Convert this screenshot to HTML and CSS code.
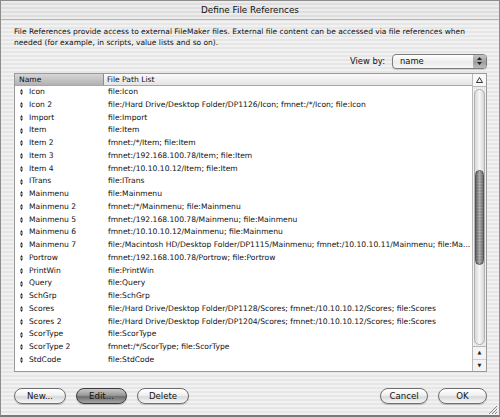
FILE: index.html
```html
<!DOCTYPE html>
<html lang="en">
<head>
  <meta charset="UTF-8">
  <title>Define File References</title>
  <link rel="stylesheet" href="styles.css">
</head>
<body>
  <div class="window">
    <!-- Title bar -->
    <div class="titlebar">Define File References</div>

    <div class="content">
      <p class="desc">File References provide access to external FileMaker files. External file content can be accessed via file references when needed (for example, in scripts, value lists and so on).</p>

      <div class="view-row">
        <span class="view-label">View by:</span>
        <div class="popup">
          <span class="popup-value">name</span>
          <span class="popup-arrows">
            <svg width="5" height="8" viewBox="0 0 5 8"><path d="M2.5 0 L5 3 L0 3 Z M2.5 8 L5 5 L0 5 Z" fill="#222"/></svg>
          </span>
        </div>
      </div>

      <!-- List -->
      <div class="list">
        <div class="list-main">
          <div class="list-header">
            <div class="hcell name-col sorted">Name</div>
            <div class="hcell path-col">File Path List</div>
          </div>
          <div class="rows" id="rows"></div>
        </div>
        <div class="scrollbar">
          <div class="sb-cap">
            <svg width="7" height="6" viewBox="0 0 7 6"><path d="M3.5 0.5 L6.5 5.5 L0.5 5.5 Z" fill="none" stroke="#333" stroke-width="1"/></svg>
          </div>
          <div class="sb-track">
            <div class="sb-thumb"></div>
          </div>
          <div class="sb-arrows">
            <span class="sb-arrow">&#9650;</span>
            <span class="sb-arrow">&#9660;</span>
          </div>
        </div>
      </div>

      <!-- Buttons -->
      <div class="button-row">
        <div class="button-group">
          <button class="btn">New...</button>
          <button class="btn btn-default">Edit...</button>
          <button class="btn">Delete</button>
        </div>
        <div class="button-group">
          <button class="btn btn-cancel">Cancel</button>
          <button class="btn btn-ok">OK</button>
        </div>
      </div>
    </div>

    <div class="grip">
      <svg width="9" height="9" viewBox="0 0 9 9">
        <path d="M9 1 L1 9 M9 4 L4 9 M9 7 L7 9" stroke="#888" stroke-width="1"/>
      </svg>
    </div>
  </div>

  <script>
    var refs = [
      ['Icon', 'file:Icon'],
      ['Icon 2', 'file:/Hard Drive/Desktop Folder/DP1126/Icon; fmnet:/*/Icon; file:Icon'],
      ['Import', 'file:Import'],
      ['Item', 'file:Item'],
      ['Item 2', 'fmnet:/*/Item; file:Item'],
      ['Item 3', 'fmnet:/192.168.100.78/Item; file:Item'],
      ['Item 4', 'fmnet:/10.10.10.12/Item; file:Item'],
      ['ITrans', 'file:ITrans'],
      ['Mainmenu', 'file:Mainmenu'],
      ['Mainmenu 2', 'fmnet:/*/Mainmenu; file:Mainmenu'],
      ['Mainmenu 5', 'fmnet:/192.168.100.78/Mainmenu; file:Mainmenu'],
      ['Mainmenu 6', 'fmnet:/10.10.10.12/Mainmenu; file:Mainmenu'],
      ['Mainmenu 7', 'file:/Macintosh HD/Desktop Folder/DP1115/Mainmenu; fmnet:/10.10.10.11/Mainmenu; file:Ma...'],
      ['Portrow', 'fmnet:/192.168.100.78/Portrow; file:Portrow'],
      ['PrintWin', 'file:PrintWin'],
      ['Query', 'file:Query'],
      ['SchGrp', 'file:SchGrp'],
      ['Scores', 'file:/Hard Drive/Desktop Folder/DP1128/Scores; fmnet:/10.10.10.12/Scores; file:Scores'],
      ['Scores 2', 'file:/Hard Drive/Desktop Folder/DP1204/Scores; fmnet:/10.10.10.12/Scores; file:Scores'],
      ['ScorType', 'file:ScorType'],
      ['ScorType 2', 'fmnet:/*/ScorType; file:ScorType'],
      ['StdCode', 'file:StdCode']
    ];

    var handle = '<svg class="handle" width="3" height="6" viewBox="0 0 3 6"><path d="M1.5 0 L3 2.5 L0 2.5 Z M1.5 6 L3 3.5 L0 3.5 Z" fill="#222"/></svg>';
    var rows = document.getElementById('rows');
    refs.forEach(function (r) {
      var row = document.createElement('div');
      row.className = 'row';
      row.innerHTML = '<div class="cell name-col">' + handle + '<span>' + r[0] + '</span></div>' +
                      '<div class="cell path-col">' + r[1] + '</div>';
      rows.appendChild(row);
    });
  </script>
</body>
</html>
```

FILE: styles.css
```css
body {
  margin: 0;
  font-family: "DejaVu Sans", Verdana, sans-serif;
  background: #6e6e6e;
}

.window {
  position: relative;
  width: 500px;
  height: 417px;
  box-sizing: border-box;
  border: 1px solid #8c8c8c;
  border-bottom: 2px solid #7a7a7a;
  background: repeating-linear-gradient(to bottom, #f1f1f1 0, #f1f1f1 2px, #e6e6e6 2px, #e6e6e6 4px);
  display: flex;
  flex-direction: column;
  color: #111;
  overflow: hidden;
}

.titlebar {
  height: 18px;
  line-height: 18px;
  text-align: center;
  font-size: 8.8px;
  border-bottom: 1px solid #b4b4b4;
  background: repeating-linear-gradient(to bottom, #ececec 0, #ececec 2px, #dedede 2px, #dedede 4px);
}

.content {
  padding: 0 12px 0 13px;
  display: flex;
  flex-direction: column;
  min-width: 0;
}

.desc {
  margin: 7px 0 0 0;
  font-size: 7.5px;
  line-height: 10.5px;
}

/* View by popup */
.view-row {
  display: flex;
  justify-content: flex-end;
  align-items: center;
  margin-top: 5px;
  height: 16px;
}

.view-label {
  font-size: 8.4px;
  margin-right: 7px;
}

.popup {
  width: 95px;
  height: 15px;
  box-sizing: border-box;
  border: 1px solid #7c7c7c;
  border-radius: 4px;
  background: linear-gradient(to bottom, #ffffff, #ececec 55%, #f7f7f7);
  display: flex;
  align-items: center;
  box-shadow: 0 1px 1px rgba(0, 0, 0, 0.15);
}

.popup-value {
  flex: 1;
  padding-left: 7px;
  font-size: 8.4px;
}

.popup-arrows {
  width: 13px;
  height: 13px;
  border-radius: 0 3px 3px 0;
  background: linear-gradient(to bottom, #c4c4c4, #9e9e9e 55%, #bcbcbc);
  display: flex;
  align-items: center;
  justify-content: center;
}

/* List */
.list {
  margin-top: 4px;
  height: 299px;
  box-sizing: border-box;
  border: 1px solid #9a9a9a;
  background: #fff;
  display: flex;
  min-width: 0;
}

.list-main {
  flex: 1;
  min-width: 0;
  display: flex;
  flex-direction: column;
}

.list-header {
  display: flex;
  height: 11px;
  border-bottom: 1px solid #a8a8a8;
  font-size: 7.6px;
}

.hcell {
  line-height: 11px;
  padding-left: 4px;
  background: linear-gradient(to bottom, #fafafa, #e4e4e4);
}

.hcell.sorted {
  background: linear-gradient(to bottom, #d6d6d6, #b2b2b2);
  border-right: 1px solid #8c8c8c;
}

.name-col {
  width: 84px;
  flex: none;
}

.path-col {
  flex: 1;
  min-width: 0;
  white-space: nowrap;
  overflow: hidden;
}

.list-header .path-col {
  padding-left: 3px;
}

.rows {
  font-size: 7.6px;
}

.row {
  display: flex;
  height: 12.76px;
  line-height: 12.76px;
}

.row .name-col {
  display: flex;
  align-items: center;
  padding-left: 5px;
  width: 84px;
}

.handle {
  margin-right: 6px;
}

.row .path-col {
  padding-left: 4px;
}

/* Scrollbar */
.scrollbar {
  width: 13px;
  flex: none;
  border-left: 1px solid #b8b8b8;
  display: flex;
  flex-direction: column;
  background: repeating-linear-gradient(to right, #f2f2f2 0, #f2f2f2 1px, #e2e2e2 1px, #e2e2e2 2px);
}

.sb-cap {
  height: 12px;
  border-bottom: 1px solid #b8b8b8;
  background: #f8f8f8;
  display: flex;
  align-items: center;
  justify-content: center;
}

.sb-track {
  flex: 1;
  margin: 2px 1px 1px 1px;
  border-radius: 6px;
  border: 1px solid #b0b0b0;
  background: linear-gradient(to right, #d8d8d8, #f6f6f6 50%, #d8d8d8);
  padding-top: 80px;
}

.sb-thumb {
  height: 95px;
  border-radius: 6px;
  border: 1px solid #555;
  box-sizing: border-box;
  background:
    repeating-linear-gradient(to bottom, rgba(255, 255, 255, 0.12) 0, rgba(255, 255, 255, 0.12) 1px, transparent 1px, transparent 3px),
    linear-gradient(to right, #5e5e5e, #a8a8a8 50%, #6a6a6a);
}

.sb-arrows {
  height: 24px;
  display: flex;
  flex-direction: column;
  border-top: 1px solid #b8b8b8;
  background: #f4f4f4;
}

.sb-arrow {
  flex: 1;
  font-size: 5px;
  text-align: center;
  line-height: 11px;
  color: #222;
}

.sb-arrow + .sb-arrow {
  border-top: 1px solid #d0d0d0;
}

/* Buttons */
.button-row {
  display: flex;
  justify-content: space-between;
  margin-top: 16px;
}

.button-group {
  display: flex;
  gap: 10px;
}

.btn {
  font-family: "DejaVu Sans", Verdana, sans-serif;
  font-size: 8.6px;
  color: #111;
  height: 16px;
  width: 52px;
  padding: 0;
  border: 1px solid #6e6e6e;
  border-radius: 8px;
  background: linear-gradient(to bottom, #ffffff, #f0f0f0 45%, #d9d9d9 55%, #f6f6f6);
  box-shadow: 0 1px 1px rgba(0, 0, 0, 0.2);
}

.btn-default {
  width: 51px;
  border-color: #3c3c3c;
  background: linear-gradient(to bottom, #c8c8c8, #9a9a9a 45%, #6e6e6e 55%, #a6a6a6);
}

.btn-cancel {
  width: 48px;
}

.btn-ok {
  width: 49px;
}

.grip {
  position: absolute;
  right: 2px;
  bottom: 1px;
  line-height: 0;
}
```
